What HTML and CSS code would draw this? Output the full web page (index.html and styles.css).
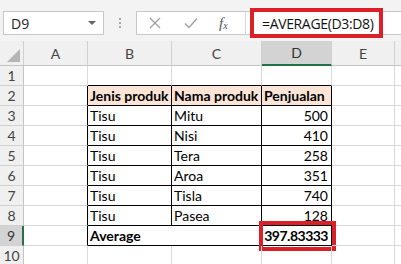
FILE: index.html
```html
<!DOCTYPE html>
<html>
<head>
<meta charset="utf-8">
<link rel="stylesheet" href="styles.css">
</head>
<body>
<div class="app">
  <div class="toolbar">
    <div class="namebox"><span class="nb-text">D9</span><span class="caret"></span></div>
    <div class="dots"><i></i><i></i><i></i></div>
    <div class="fbtns">
      <svg class="ico" width="12" height="12" viewBox="0 0 12 12"><path d="M1 1L11 11M11 1L1 11" stroke="#a0a0a0" stroke-width="1.3" fill="none"/></svg>
      <svg class="ico" width="14" height="12" viewBox="0 0 14 12"><path d="M1 6.5L5 10.5L13 1.5" stroke="#a0a0a0" stroke-width="1.4" fill="none"/></svg>
      <span class="fx">f<sub>x</sub></span>
    </div>
    <div class="finput"><span class="ftext">=AVERAGE(D3:D8)</span></div>
    <div class="redbox rb-formula"></div>
  </div>
  <div class="sheet">
    <div class="ch corner"><span class="tri"></span></div>
    <div class="ch">A</div>
    <div class="ch">B</div>
    <div class="ch">C</div>
    <div class="ch sel">D</div>
    <div class="ch">E</div>
    <div class="ch"></div>

    <div class="rh">1</div>
    <div class="c"></div><div class="c bb"></div><div class="c bb"></div><div class="c bb"></div><div class="c"></div><div class="c"></div>

    <div class="rh">2</div>
    <div class="c br"></div><div class="c t hd">Jenis produk</div><div class="c t hd">Nama produk</div><div class="c t hd">Penjualan</div><div class="c"></div><div class="c"></div>

    <div class="rh">3</div>
    <div class="c br"></div><div class="c t">Tisu</div><div class="c t">Mitu</div><div class="c t num">500</div><div class="c"></div><div class="c"></div>

    <div class="rh">4</div>
    <div class="c br"></div><div class="c t">Tisu</div><div class="c t">Nisi</div><div class="c t num">410</div><div class="c"></div><div class="c"></div>

    <div class="rh">5</div>
    <div class="c br"></div><div class="c t">Tisu</div><div class="c t">Tera</div><div class="c t num">258</div><div class="c"></div><div class="c"></div>

    <div class="rh">6</div>
    <div class="c br"></div><div class="c t">Tisu</div><div class="c t">Aroa</div><div class="c t num">351</div><div class="c"></div><div class="c"></div>

    <div class="rh">7</div>
    <div class="c br"></div><div class="c t">Tisu</div><div class="c t">Tisla</div><div class="c t num">740</div><div class="c"></div><div class="c"></div>

    <div class="rh">8</div>
    <div class="c br"></div><div class="c t">Tisu</div><div class="c t">Pasea</div><div class="c t num">128</div><div class="c"></div><div class="c"></div>

    <div class="rh selr">9</div>
    <div class="c br"></div><div class="c t b span2">Average</div><div class="c t num b d9">397.83333<div class="redbox rb-cell"></div></div><div class="c"></div><div class="c"></div>

    <div class="rh">10</div>
    <div class="c"></div><div class="c"></div><div class="c"></div><div class="c"></div><div class="c"></div><div class="c"></div>
  </div>
</div>
</body>
</html>
```
FILE: styles.css
```css
html, body {
  margin: 0;
  padding: 0;
  background: #ffffff;
  overflow: hidden;
}
.app {
  width: 401px;
  height: 264px;
  overflow: hidden;
  font-family: "Lato", "Liberation Sans", sans-serif;
}
.toolbar {
  position: relative;
  height: 41px;
  background: #f3f3f3;
  display: flex;
  align-items: flex-start;
  box-sizing: border-box;
  padding-top: 11px;
}
.namebox {
  margin-left: 3px;
  width: 101px;
  height: 24px;
  background: #fff;
  border: 1px solid #c8c8c8;
  box-sizing: border-box;
  display: flex;
  align-items: center;
  justify-content: space-between;
  padding: 0 7px 0 7px;
  font-family: "Open Sans", "Liberation Sans", sans-serif;
  font-size: 14px;
  color: #222;
}
.caret {
  width: 0;
  height: 0;
  border-left: 4px solid transparent;
  border-right: 4px solid transparent;
  border-top: 4px solid #666;
}
.dots {
  width: 32px;
  height: 24px;
  display: flex;
  flex-direction: column;
  align-items: center;
  justify-content: center;
  gap: 2px;
}
.dots i {
  display: block;
  width: 2px;
  height: 2px;
  background: #a8a8a8;
}
.fbtns {
  width: 110px;
  height: 24px;
  background: #fff;
  border: 1px solid #c8c8c8;
  border-right: 1px solid #d8d8d8;
  box-sizing: border-box;
  display: flex;
  align-items: center;
  padding-left: 12px;
  gap: 0;
}
.fbtns .ico:first-child { margin-right: 23px; }
.fbtns .ico:nth-child(2) { margin-right: 21px; }
.fx {
  font-family: "Liberation Serif", serif;
  font-style: italic;
  font-size: 15px;
  color: #555;
  line-height: 1;
}
.fx sub {
  font-size: 10px;
  vertical-align: -1px;
}
.finput {
  flex: 1;
  height: 24px;
  background: #fff;
  border-top: 1px solid #c8c8c8;
  border-bottom: 1px solid #c8c8c8;
  box-sizing: border-box;
  display: flex;
  align-items: center;
  padding-left: 16px;
  font-family: "Open Sans", "Liberation Sans", sans-serif;
  font-size: 14px;
  letter-spacing: -0.35px;
  color: #111;
}
.redbox {
  position: absolute;
  border: 4px solid #dc2029;
  box-sizing: border-box;
  pointer-events: none;
}
.rb-formula {
  left: 250px;
  top: 8px;
  width: 133px;
  height: 30px;
}
.sheet {
  display: grid;
  grid-template-columns: 24px 64px 84px 90px 70px 63px 40px;
  grid-template-rows: 25px repeat(10, 20px);
  font-size: 14px;
  color: #000;
}
.ch {
  background: #f0f0f0;
  border-right: 1px solid #d0d0d0;
  border-bottom: 1px solid #c4c4c4;
  box-sizing: border-box;
  display: flex;
  align-items: center;
  justify-content: center;
  color: #444;
  font-size: 14px;
}
.ch.sel {
  background: #d3d3d3;
  border-bottom: 2px solid #217346;
  color: #333;
}
.corner {
  position: relative;
}
.tri {
  position: absolute;
  right: 3px;
  bottom: 3px;
  width: 0;
  height: 0;
  border-left: 13px solid transparent;
  border-bottom: 13px solid #b5b5b5;
}
.rh {
  background: #f0f0f0;
  border-right: 1px solid #c4c4c4;
  border-bottom: 1px solid #d0d0d0;
  box-sizing: border-box;
  display: flex;
  align-items: center;
  justify-content: center;
  color: #444;
  font-size: 14px;
}
.rh.selr {
  background: #d3d3d3;
  border-right: 2px solid #217346;
  color: #333;
}
.c {
  border-right: 1px solid #d9d9d9;
  border-bottom: 1px solid #d9d9d9;
  box-sizing: border-box;
  display: flex;
  align-items: center;
  padding: 0 3px 0 2px;
  white-space: nowrap;
  overflow: visible;
  position: relative;
}
.c.bb { border-bottom-color: #000; }
.c.br { border-right-color: #000; }
.c.t {
  border-right-color: #000;
  border-bottom-color: #000;
}
.c.hd {
  background: #fce4d6;
  font-weight: bold;
}
.c.b { font-weight: bold; }
.c.num { justify-content: flex-end; }
.c.d9 { letter-spacing: -0.5px; }
.span2 { grid-column: span 2; }
.rb-cell {
  left: -3px;
  top: -5px;
  width: 77px;
  height: 30px;
}
```
